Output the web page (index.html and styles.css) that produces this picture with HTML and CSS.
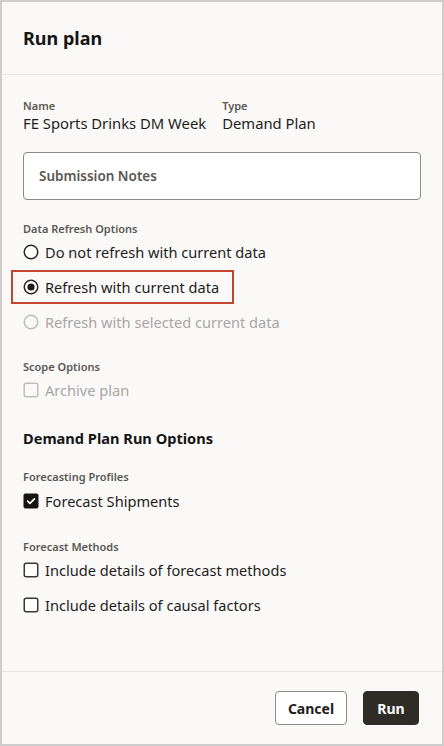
FILE: index.html
```html
<!DOCTYPE html>
<html>
<head>
<meta charset="utf-8">
<link rel="stylesheet" href="styles.css">
</head>
<body>
<div class="dialog">
  <header class="header"><h1 class="title">Run plan</h1></header>
  <main class="content">
    <div class="fields">
      <div class="field">
        <div class="label">Name</div>
        <div class="value">FE Sports Drinks DM Week</div>
      </div>
      <div class="field">
        <div class="label">Type</div>
        <div class="value">Demand Plan</div>
      </div>
    </div>
    <div class="notes">Submission Notes</div>

    <div class="label group-label">Data Refresh Options</div>
    <div class="row">
      <svg class="ico" width="16" height="16" viewBox="0 0 16 16"><circle cx="8" cy="8" r="6.75" fill="#fff" stroke="#2b2926" stroke-width="1.5"/></svg>
      <span>Do not refresh with current data</span>
    </div>
    <div class="row highlight">
      <svg class="ico" width="16" height="16" viewBox="0 0 16 16"><circle cx="8" cy="8" r="6.75" fill="#fff" stroke="#2b2926" stroke-width="1.5"/><circle cx="8" cy="8" r="3.6" fill="#1c1a18"/></svg>
      <span>Refresh with current data</span>
    </div>
    <div class="row disabled">
      <svg class="ico" width="16" height="16" viewBox="0 0 16 16"><circle cx="8" cy="8" r="6.75" fill="none" stroke="#bdbdbd" stroke-width="1.5"/></svg>
      <span>Refresh with selected current data</span>
    </div>

    <div class="label group-label tight">Scope Options</div>
    <div class="row disabled">
      <svg class="ico" width="16" height="16" viewBox="0 0 16 16"><rect x="1.25" y="1.25" width="13.5" height="13.5" rx="2" fill="none" stroke="#bdbdbd" stroke-width="1.5"/></svg>
      <span>Archive plan</span>
    </div>

    <h2 class="section">Demand Plan Run Options</h2>

    <div class="label group-label">Forecasting Profiles</div>
    <div class="row flush">
      <svg class="ico" width="16" height="16" viewBox="0 0 16 16"><rect x="0.5" y="0.5" width="15" height="15" rx="2" fill="#161513"/><path d="M4.6 8.2 L6.9 10.4 L11.4 5.8" fill="none" stroke="#fff" stroke-width="1.7" stroke-linecap="round" stroke-linejoin="round"/></svg>
      <span>Forecast Shipments</span>
    </div>

    <div class="label group-label">Forecast Methods</div>
    <div class="row">
      <svg class="ico" width="16" height="16" viewBox="0 0 16 16"><rect x="1.25" y="1.25" width="13.5" height="13.5" rx="2" fill="#fff" stroke="#3a3734" stroke-width="1.5"/></svg>
      <span>Include details of forecast methods</span>
    </div>
    <div class="row">
      <svg class="ico" width="16" height="16" viewBox="0 0 16 16"><rect x="1.25" y="1.25" width="13.5" height="13.5" rx="2" fill="#fff" stroke="#3a3734" stroke-width="1.5"/></svg>
      <span>Include details of causal factors</span>
    </div>
  </main>
  <footer class="footer">
    <button class="btn btn-outline">Cancel</button>
    <button class="btn btn-primary">Run</button>
  </footer>
</div>
</body>
</html>
```

FILE: styles.css
```css
* { box-sizing: border-box; }
html, body { margin: 0; padding: 0; }
body {
  font-family: "Noto Sans", "Open Sans", sans-serif;
  color: #1f1d1b;
  background: #faf9f8;
}
.dialog {
  width: 444px;
  height: 746px;
  border: 2px solid #cdcdcd;
  background: #faf9f8;
  display: flex;
  flex-direction: column;
}
.header {
  height: 73px;
  border-bottom: 1px solid #e9e7e4;
  padding: 24px 21px 0;
  flex: none;
}
.title {
  margin: 0;
  font-size: 18px;
  line-height: 24px;
  font-weight: 700;
  color: #161513;
}
.content {
  flex: 1;
  padding: 24px 21px 0;
}
.fields {
  display: flex;
  gap: 16px;
}
.label {
  font-size: 11px;
  line-height: 14px;
  font-weight: 600;
  color: #5b5752;
}
.value {
  font-size: 14.8px;
  line-height: 20px;
  color: #1f1d1b;
}
.notes {
  margin-top: 19px;
  height: 48px;
  border: 1px solid #8e8a86;
  border-radius: 4px;
  background: #fff;
  padding-left: 15px;
  display: flex;
  align-items: center;
  font-size: 13.5px;
  font-weight: 600;
  color: #5b5752;
}
.group-label {
  margin-top: 22px;
}
.group-label.tight {
  margin-top: 21px;
}
.row {
  height: 34px;
  display: flex;
  align-items: center;
  gap: 6px;
  font-size: 14.6px;
  color: #1f1d1b;
  margin-top: 1px;
}
.group-label + .row { margin-top: -1px; }
.group-label + .row.flush { margin-top: 0; }
.ico { flex: none; display: block; }
.disabled { color: #a9a6a3; }
.highlight {
  width: 223px;
  margin-left: -12px;
  padding-left: 10px;
  border: 2px solid #c4452f;
}
.section {
  margin: 21px 0 0;
  font-size: 14.6px;
  line-height: 20px;
  font-weight: 700;
  color: #161513;
}
.footer {
  flex: none;
  border-top: 1px solid #e9e7e4;
  padding: 19px 23px 19px 0;
  display: flex;
  justify-content: flex-end;
  gap: 16px;
}
.btn {
  height: 34px;
  border-radius: 4px;
  font-family: inherit;
  font-size: 14px;
  font-weight: 700;
  padding: 0;
  cursor: pointer;
}
.btn-outline {
  width: 72px;
  background: #fff;
  border: 1px solid #8e8a86;
  color: #1f1d1b;
}
.btn-primary {
  width: 56px;
  background: #2f2b27;
  border: 1px solid #2f2b27;
  color: #fff;
}
```
